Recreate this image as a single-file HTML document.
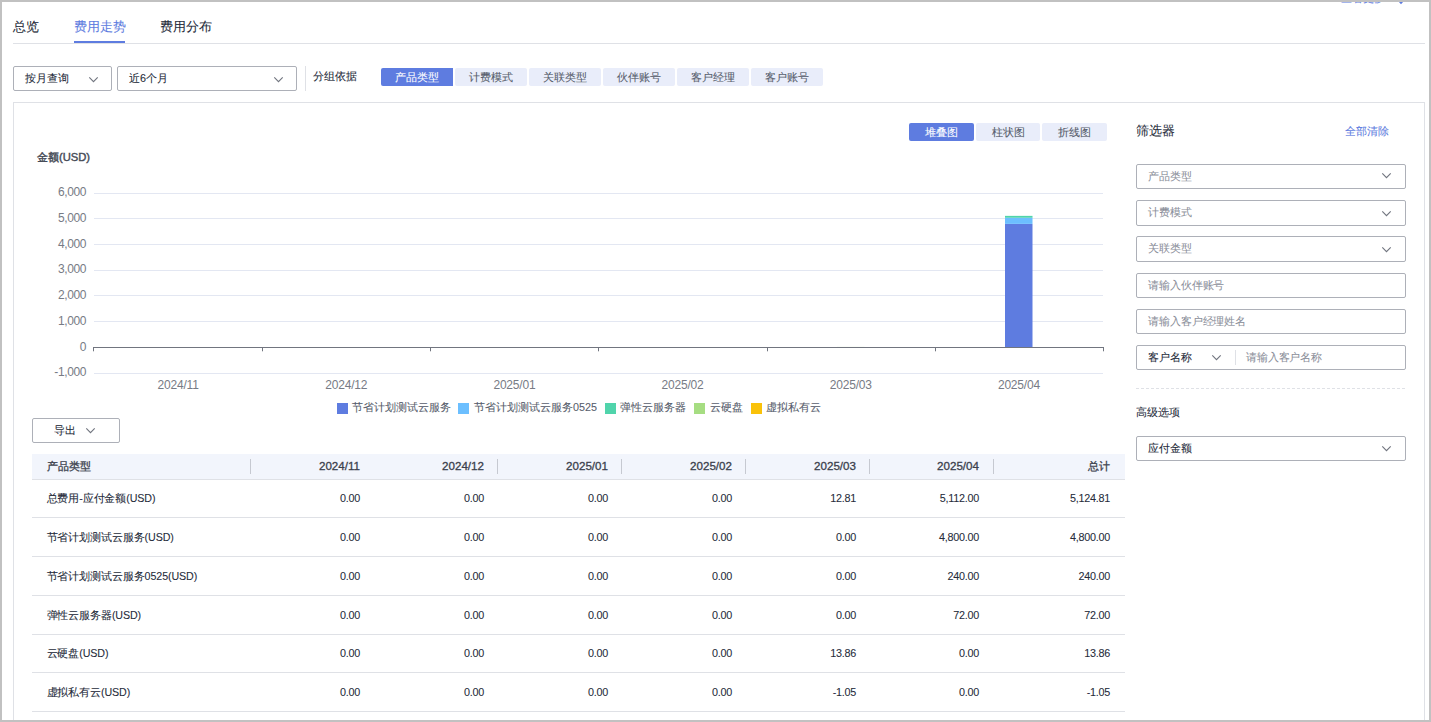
<!DOCTYPE html><html><head><meta charset="utf-8"><style>
html,body{margin:0;padding:0;}
body{width:1431px;height:722px;overflow:hidden;position:relative;background:#fff;font-family:"Liberation Sans",sans-serif;}
.t{position:absolute;line-height:20px;height:20px;white-space:nowrap;-webkit-text-stroke:0.08px currentColor;}
.b{position:absolute;box-sizing:border-box;}
</style></head><body>
<div class="t" style="left:1341px;top:-12px;font-size:10.8px;color:#5e7ce0;">查看更多</div>
<svg class="b" style="left:1397.5px;top:0px" width="7" height="5"><path d="M0 1 L6 1 L3 4.2 Z" fill="#5e7ce0"/></svg>
<div class="t" style="left:13px;top:17px;font-size:12.6px;color:#252b3a;">总览</div>
<div class="t" style="left:74px;top:17px;font-size:12.6px;color:#5e7ce0;">费用走势</div>
<div class="t" style="left:160px;top:17px;font-size:12.6px;color:#252b3a;">费用分布</div>
<div class="b" style="left:13px;top:43px;width:1412px;height:1px;background:#dfe1e6"></div>
<div class="b" style="left:74px;top:41px;width:51px;height:2px;background:#5e7ce0"></div>
<div class="b" style="left:13px;top:66px;width:99px;height:25px;border:1px solid #adb0b8;border-radius:2px"></div>
<div class="t" style="left:25px;top:68px;font-size:10.8px;color:#252b3a;">按月查询</div>
<svg class="b" style="left:88px;top:75.5px" width="11" height="7" viewBox="-1 -1 11 7"><path d="M0.3 0.3 L4.5 4.7 L8.7 0.3" fill="none" stroke="#71757f" stroke-width="1.1"/></svg>
<div class="b" style="left:117px;top:66px;width:180px;height:25px;border:1px solid #adb0b8;border-radius:2px"></div>
<div class="t" style="left:129px;top:68px;font-size:10.8px;color:#252b3a;">近6个月</div>
<svg class="b" style="left:272.5px;top:75.5px" width="11" height="7" viewBox="-1 -1 11 7"><path d="M0.3 0.3 L4.5 4.7 L8.7 0.3" fill="none" stroke="#71757f" stroke-width="1.1"/></svg>
<div class="b" style="left:305px;top:66px;width:1px;height:25px;background:#dfe1e6"></div>
<div class="t" style="left:313px;top:66px;font-size:10.8px;color:#252b3a;">分组依据</div>
<div class="b" style="left:381px;top:68px;width:72px;height:18px;background:#5e7ce0;border-radius:2px 0 0 2px"></div>
<div class="t" style="left:317px;width:200px;top:67px;font-size:10.8px;color:#fff;text-align:center;">产品类型</div>
<div class="b" style="left:455px;top:68px;width:72px;height:18px;background:#e9edfa;border-radius:2px"></div>
<div class="t" style="left:391px;width:200px;top:67px;font-size:10.8px;color:#575d6c;text-align:center;">计费模式</div>
<div class="b" style="left:529px;top:68px;width:72px;height:18px;background:#e9edfa;border-radius:2px"></div>
<div class="t" style="left:465px;width:200px;top:67px;font-size:10.8px;color:#575d6c;text-align:center;">关联类型</div>
<div class="b" style="left:603px;top:68px;width:72px;height:18px;background:#e9edfa;border-radius:2px"></div>
<div class="t" style="left:539px;width:200px;top:67px;font-size:10.8px;color:#575d6c;text-align:center;">伙伴账号</div>
<div class="b" style="left:677px;top:68px;width:72px;height:18px;background:#e9edfa;border-radius:2px"></div>
<div class="t" style="left:613px;width:200px;top:67px;font-size:10.8px;color:#575d6c;text-align:center;">客户经理</div>
<div class="b" style="left:751px;top:68px;width:72px;height:18px;background:#e9edfa;border-radius:2px"></div>
<div class="t" style="left:687px;width:200px;top:67px;font-size:10.8px;color:#575d6c;text-align:center;">客户账号</div>
<div class="b" style="left:13px;top:102px;width:1412px;height:798px;border:1px solid #dfe1e6"></div>
<div class="b" style="left:909px;top:123px;width:65px;height:18px;background:#5e7ce0;border-radius:2px"></div>
<div class="t" style="left:841.5px;width:200px;top:122px;font-size:10.8px;color:#fff;text-align:center;">堆叠图</div>
<div class="b" style="left:976px;top:123px;width:64px;height:18px;background:#e9edfa;border-radius:2px"></div>
<div class="t" style="left:908.0px;width:200px;top:122px;font-size:10.8px;color:#575d6c;text-align:center;">柱状图</div>
<div class="b" style="left:1042px;top:123px;width:65px;height:18px;background:#e9edfa;border-radius:2px"></div>
<div class="t" style="left:974.5px;width:200px;top:122px;font-size:10.8px;color:#575d6c;text-align:center;">折线图</div>
<div class="t" style="left:37px;top:147px;font-size:11.2px;color:#454a56;-webkit-text-stroke:0.4px #454a56">金额(USD)</div>
<svg class="b" style="left:0;top:0" width="1431" height="722"><line x1="94" y1="193.5" x2="1103" y2="193.5" stroke="#e3e7f2" stroke-width="1"/><line x1="94" y1="218.5" x2="1103" y2="218.5" stroke="#e3e7f2" stroke-width="1"/><line x1="94" y1="244.5" x2="1103" y2="244.5" stroke="#e3e7f2" stroke-width="1"/><line x1="94" y1="270.5" x2="1103" y2="270.5" stroke="#e3e7f2" stroke-width="1"/><line x1="94" y1="295.5" x2="1103" y2="295.5" stroke="#e3e7f2" stroke-width="1"/><line x1="94" y1="321.5" x2="1103" y2="321.5" stroke="#e3e7f2" stroke-width="1"/><line x1="94" y1="373.5" x2="1103" y2="373.5" stroke="#e3e7f2" stroke-width="1"/><rect x="1005" y="223.892" width="27.5" height="123.40800000000002" fill="#5e7ce0"/><rect x="1005" y="217.7216" width="27.5" height="6.170400000000001" fill="#6cbfff"/><rect x="1005" y="215.87048000000001" width="27.5" height="1.8511199999999803" fill="#50d4ab"/><rect x="837" y="346.9436594" width="27.5" height="0.35634060000001" fill="#a6dd82"/><line x1="93.5" y1="347.5" x2="1103" y2="347.5" stroke="#71757f" stroke-width="1"/><line x1="93.5" y1="347" x2="93.5" y2="351.3" stroke="#71757f" stroke-width="1"/><line x1="262.5" y1="347" x2="262.5" y2="351.3" stroke="#71757f" stroke-width="1"/><line x1="430.5" y1="347" x2="430.5" y2="351.3" stroke="#71757f" stroke-width="1"/><line x1="598.5" y1="347" x2="598.5" y2="351.3" stroke="#71757f" stroke-width="1"/><line x1="767.5" y1="347" x2="767.5" y2="351.3" stroke="#71757f" stroke-width="1"/><line x1="935.5" y1="347" x2="935.5" y2="351.3" stroke="#71757f" stroke-width="1"/><line x1="1103.5" y1="347" x2="1103.5" y2="351.3" stroke="#71757f" stroke-width="1"/></svg>
<div class="t" style="right:1345px;top:182.24px;font-size:12px;color:#777b85;text-align:right;letter-spacing:-0.4px;-webkit-text-stroke:0">6,000</div>
<div class="t" style="right:1345px;top:207.95px;font-size:12px;color:#777b85;text-align:right;letter-spacing:-0.4px;-webkit-text-stroke:0">5,000</div>
<div class="t" style="right:1345px;top:233.66px;font-size:12px;color:#777b85;text-align:right;letter-spacing:-0.4px;-webkit-text-stroke:0">4,000</div>
<div class="t" style="right:1345px;top:259.37px;font-size:12px;color:#777b85;text-align:right;letter-spacing:-0.4px;-webkit-text-stroke:0">3,000</div>
<div class="t" style="right:1345px;top:285.08px;font-size:12px;color:#777b85;text-align:right;letter-spacing:-0.4px;-webkit-text-stroke:0">2,000</div>
<div class="t" style="right:1345px;top:310.79px;font-size:12px;color:#777b85;text-align:right;letter-spacing:-0.4px;-webkit-text-stroke:0">1,000</div>
<div class="t" style="right:1345px;top:336.5px;font-size:12px;color:#777b85;text-align:right;letter-spacing:-0.4px;-webkit-text-stroke:0">0</div>
<div class="t" style="right:1345px;top:362.21px;font-size:12px;color:#777b85;text-align:right;letter-spacing:-0.4px;-webkit-text-stroke:0">-1,000</div>
<div class="t" style="left:78.08333333333331px;width:200px;top:375px;font-size:12px;color:#777b85;text-align:center;letter-spacing:-0.2px;-webkit-text-stroke:0">2024/11</div>
<div class="t" style="left:246.25px;width:200px;top:375px;font-size:12px;color:#777b85;text-align:center;letter-spacing:-0.2px;-webkit-text-stroke:0">2024/12</div>
<div class="t" style="left:414.41666666666663px;width:200px;top:375px;font-size:12px;color:#777b85;text-align:center;letter-spacing:-0.2px;-webkit-text-stroke:0">2025/01</div>
<div class="t" style="left:582.5833333333333px;width:200px;top:375px;font-size:12px;color:#777b85;text-align:center;letter-spacing:-0.2px;-webkit-text-stroke:0">2025/02</div>
<div class="t" style="left:750.75px;width:200px;top:375px;font-size:12px;color:#777b85;text-align:center;letter-spacing:-0.2px;-webkit-text-stroke:0">2025/03</div>
<div class="t" style="left:918.9166666666666px;width:200px;top:375px;font-size:12px;color:#777b85;text-align:center;letter-spacing:-0.2px;-webkit-text-stroke:0">2025/04</div>
<div class="b" style="left:337px;top:403px;width:11px;height:11px;background:#5e7ce0"></div>
<div class="t" style="left:352px;top:397.4px;font-size:10.8px;color:#575d6c;">节省计划测试云服务</div>
<div class="b" style="left:458px;top:403px;width:11px;height:11px;background:#6cbfff"></div>
<div class="t" style="left:474px;top:397.4px;font-size:10.8px;color:#575d6c;">节省计划测试云服务0525</div>
<div class="b" style="left:605px;top:403px;width:11px;height:11px;background:#50d4ab"></div>
<div class="t" style="left:620px;top:397.4px;font-size:10.8px;color:#575d6c;">弹性云服务器</div>
<div class="b" style="left:694px;top:403px;width:11px;height:11px;background:#a6dd82"></div>
<div class="t" style="left:710px;top:397.4px;font-size:10.8px;color:#575d6c;">云硬盘</div>
<div class="b" style="left:751px;top:403px;width:11px;height:11px;background:#fac20a"></div>
<div class="t" style="left:766px;top:397.4px;font-size:10.8px;color:#575d6c;">虚拟私有云</div>
<div class="b" style="left:32px;top:418px;width:88px;height:25px;border:1px solid #adb0b8;border-radius:2px"></div>
<div class="t" style="left:54.4px;top:420px;font-size:10.8px;color:#252b3a;">导出</div>
<svg class="b" style="left:85px;top:427px" width="11" height="7" viewBox="-1 -1 11 7"><path d="M0.3 0.3 L4.5 4.7 L8.7 0.3" fill="none" stroke="#71757f" stroke-width="1.1"/></svg>
<div class="b" style="left:32px;top:454px;width:1093px;height:25px;background:#f2f5fc"></div>
<div class="b" style="left:32px;top:479px;width:1093px;height:1px;background:#dfe1e6"></div>
<div class="t" style="left:47px;top:456px;font-size:10.8px;color:#3a3f4c;-webkit-text-stroke:0.3px #3a3f4c">产品类型</div>
<div class="t" style="right:1071px;top:456px;font-size:11.6px;color:#3a3f4c;text-align:right;-webkit-text-stroke:0.3px #3a3f4c">2024/11</div>
<div class="t" style="right:947px;top:456px;font-size:11.6px;color:#3a3f4c;text-align:right;-webkit-text-stroke:0.3px #3a3f4c">2024/12</div>
<div class="t" style="right:823px;top:456px;font-size:11.6px;color:#3a3f4c;text-align:right;-webkit-text-stroke:0.3px #3a3f4c">2025/01</div>
<div class="t" style="right:699px;top:456px;font-size:11.6px;color:#3a3f4c;text-align:right;-webkit-text-stroke:0.3px #3a3f4c">2025/02</div>
<div class="t" style="right:575px;top:456px;font-size:11.6px;color:#3a3f4c;text-align:right;-webkit-text-stroke:0.3px #3a3f4c">2025/03</div>
<div class="t" style="right:452px;top:456px;font-size:11.6px;color:#3a3f4c;text-align:right;-webkit-text-stroke:0.3px #3a3f4c">2025/04</div>
<div class="t" style="right:321px;top:456px;font-size:10.8px;color:#3a3f4c;text-align:right;-webkit-text-stroke:0.3px #3a3f4c">总计</div>
<div class="b" style="left:250px;top:459px;width:1px;height:15px;background:#c6c9d1"></div>
<div class="b" style="left:497px;top:459px;width:1px;height:15px;background:#c6c9d1"></div>
<div class="b" style="left:621px;top:459px;width:1px;height:15px;background:#c6c9d1"></div>
<div class="b" style="left:745px;top:459px;width:1px;height:15px;background:#c6c9d1"></div>
<div class="b" style="left:869px;top:459px;width:1px;height:15px;background:#c6c9d1"></div>
<div class="b" style="left:993px;top:459px;width:1px;height:15px;background:#c6c9d1"></div>
<div class="t" style="left:46.5px;top:488.0px;font-size:10.7px;color:#252b3a;letter-spacing:-0.1px">总费用-应付金额(USD)</div>
<div class="t" style="right:1071px;top:488.0px;font-size:10.8px;color:#252b3a;text-align:right;letter-spacing:-0.25px">0.00</div>
<div class="t" style="right:947px;top:488.0px;font-size:10.8px;color:#252b3a;text-align:right;letter-spacing:-0.25px">0.00</div>
<div class="t" style="right:823px;top:488.0px;font-size:10.8px;color:#252b3a;text-align:right;letter-spacing:-0.25px">0.00</div>
<div class="t" style="right:699px;top:488.0px;font-size:10.8px;color:#252b3a;text-align:right;letter-spacing:-0.25px">0.00</div>
<div class="t" style="right:575px;top:488.0px;font-size:10.8px;color:#252b3a;text-align:right;letter-spacing:-0.25px">12.81</div>
<div class="t" style="right:452px;top:488.0px;font-size:10.8px;color:#252b3a;text-align:right;letter-spacing:-0.25px">5,112.00</div>
<div class="t" style="right:321px;top:488.0px;font-size:10.8px;color:#252b3a;text-align:right;letter-spacing:-0.25px">5,124.81</div>
<div class="b" style="left:32px;top:517px;width:1093px;height:1px;background:#dfe1e6"></div>
<div class="t" style="left:46.5px;top:526.5px;font-size:10.7px;color:#252b3a;letter-spacing:-0.1px">节省计划测试云服务(USD)</div>
<div class="t" style="right:1071px;top:526.5px;font-size:10.8px;color:#252b3a;text-align:right;letter-spacing:-0.25px">0.00</div>
<div class="t" style="right:947px;top:526.5px;font-size:10.8px;color:#252b3a;text-align:right;letter-spacing:-0.25px">0.00</div>
<div class="t" style="right:823px;top:526.5px;font-size:10.8px;color:#252b3a;text-align:right;letter-spacing:-0.25px">0.00</div>
<div class="t" style="right:699px;top:526.5px;font-size:10.8px;color:#252b3a;text-align:right;letter-spacing:-0.25px">0.00</div>
<div class="t" style="right:575px;top:526.5px;font-size:10.8px;color:#252b3a;text-align:right;letter-spacing:-0.25px">0.00</div>
<div class="t" style="right:452px;top:526.5px;font-size:10.8px;color:#252b3a;text-align:right;letter-spacing:-0.25px">4,800.00</div>
<div class="t" style="right:321px;top:526.5px;font-size:10.8px;color:#252b3a;text-align:right;letter-spacing:-0.25px">4,800.00</div>
<div class="b" style="left:32px;top:556px;width:1093px;height:1px;background:#dfe1e6"></div>
<div class="t" style="left:46.5px;top:565.5px;font-size:10.7px;color:#252b3a;letter-spacing:-0.1px">节省计划测试云服务0525(USD)</div>
<div class="t" style="right:1071px;top:565.5px;font-size:10.8px;color:#252b3a;text-align:right;letter-spacing:-0.25px">0.00</div>
<div class="t" style="right:947px;top:565.5px;font-size:10.8px;color:#252b3a;text-align:right;letter-spacing:-0.25px">0.00</div>
<div class="t" style="right:823px;top:565.5px;font-size:10.8px;color:#252b3a;text-align:right;letter-spacing:-0.25px">0.00</div>
<div class="t" style="right:699px;top:565.5px;font-size:10.8px;color:#252b3a;text-align:right;letter-spacing:-0.25px">0.00</div>
<div class="t" style="right:575px;top:565.5px;font-size:10.8px;color:#252b3a;text-align:right;letter-spacing:-0.25px">0.00</div>
<div class="t" style="right:452px;top:565.5px;font-size:10.8px;color:#252b3a;text-align:right;letter-spacing:-0.25px">240.00</div>
<div class="t" style="right:321px;top:565.5px;font-size:10.8px;color:#252b3a;text-align:right;letter-spacing:-0.25px">240.00</div>
<div class="b" style="left:32px;top:595px;width:1093px;height:1px;background:#dfe1e6"></div>
<div class="t" style="left:46.5px;top:604.5px;font-size:10.7px;color:#252b3a;letter-spacing:-0.1px">弹性云服务器(USD)</div>
<div class="t" style="right:1071px;top:604.5px;font-size:10.8px;color:#252b3a;text-align:right;letter-spacing:-0.25px">0.00</div>
<div class="t" style="right:947px;top:604.5px;font-size:10.8px;color:#252b3a;text-align:right;letter-spacing:-0.25px">0.00</div>
<div class="t" style="right:823px;top:604.5px;font-size:10.8px;color:#252b3a;text-align:right;letter-spacing:-0.25px">0.00</div>
<div class="t" style="right:699px;top:604.5px;font-size:10.8px;color:#252b3a;text-align:right;letter-spacing:-0.25px">0.00</div>
<div class="t" style="right:575px;top:604.5px;font-size:10.8px;color:#252b3a;text-align:right;letter-spacing:-0.25px">0.00</div>
<div class="t" style="right:452px;top:604.5px;font-size:10.8px;color:#252b3a;text-align:right;letter-spacing:-0.25px">72.00</div>
<div class="t" style="right:321px;top:604.5px;font-size:10.8px;color:#252b3a;text-align:right;letter-spacing:-0.25px">72.00</div>
<div class="b" style="left:32px;top:634px;width:1093px;height:1px;background:#dfe1e6"></div>
<div class="t" style="left:46.5px;top:643.0px;font-size:10.7px;color:#252b3a;letter-spacing:-0.1px">云硬盘(USD)</div>
<div class="t" style="right:1071px;top:643.0px;font-size:10.8px;color:#252b3a;text-align:right;letter-spacing:-0.25px">0.00</div>
<div class="t" style="right:947px;top:643.0px;font-size:10.8px;color:#252b3a;text-align:right;letter-spacing:-0.25px">0.00</div>
<div class="t" style="right:823px;top:643.0px;font-size:10.8px;color:#252b3a;text-align:right;letter-spacing:-0.25px">0.00</div>
<div class="t" style="right:699px;top:643.0px;font-size:10.8px;color:#252b3a;text-align:right;letter-spacing:-0.25px">0.00</div>
<div class="t" style="right:575px;top:643.0px;font-size:10.8px;color:#252b3a;text-align:right;letter-spacing:-0.25px">13.86</div>
<div class="t" style="right:452px;top:643.0px;font-size:10.8px;color:#252b3a;text-align:right;letter-spacing:-0.25px">0.00</div>
<div class="t" style="right:321px;top:643.0px;font-size:10.8px;color:#252b3a;text-align:right;letter-spacing:-0.25px">13.86</div>
<div class="b" style="left:32px;top:672px;width:1093px;height:1px;background:#dfe1e6"></div>
<div class="t" style="left:46.5px;top:681.5px;font-size:10.7px;color:#252b3a;letter-spacing:-0.1px">虚拟私有云(USD)</div>
<div class="t" style="right:1071px;top:681.5px;font-size:10.8px;color:#252b3a;text-align:right;letter-spacing:-0.25px">0.00</div>
<div class="t" style="right:947px;top:681.5px;font-size:10.8px;color:#252b3a;text-align:right;letter-spacing:-0.25px">0.00</div>
<div class="t" style="right:823px;top:681.5px;font-size:10.8px;color:#252b3a;text-align:right;letter-spacing:-0.25px">0.00</div>
<div class="t" style="right:699px;top:681.5px;font-size:10.8px;color:#252b3a;text-align:right;letter-spacing:-0.25px">0.00</div>
<div class="t" style="right:575px;top:681.5px;font-size:10.8px;color:#252b3a;text-align:right;letter-spacing:-0.25px">-1.05</div>
<div class="t" style="right:452px;top:681.5px;font-size:10.8px;color:#252b3a;text-align:right;letter-spacing:-0.25px">0.00</div>
<div class="t" style="right:321px;top:681.5px;font-size:10.8px;color:#252b3a;text-align:right;letter-spacing:-0.25px">-1.05</div>
<div class="b" style="left:32px;top:711px;width:1093px;height:1px;background:#dfe1e6"></div>
<div class="t" style="left:1136px;top:121px;font-size:12.6px;color:#252b3a;-webkit-text-stroke:0.05px">筛选器</div>
<div class="t" style="left:1345px;top:121px;font-size:10.8px;color:#5e7ce0;">全部清除</div>
<div class="b" style="left:1136px;top:164px;width:270px;height:25px;border:1px solid #adb0b8;border-radius:2px"></div>
<div class="t" style="left:1148.3px;top:165.5px;font-size:10.8px;color:#8a8e99;letter-spacing:-0.15px;-webkit-text-stroke:0.05px">产品类型</div>
<svg class="b" style="left:1381px;top:172px" width="11" height="7" viewBox="-1 -1 11 7"><path d="M0.3 0.3 L4.5 4.7 L8.7 0.3" fill="none" stroke="#71757f" stroke-width="1.1"/></svg>
<div class="b" style="left:1136px;top:200px;width:270px;height:26px;border:1px solid #adb0b8;border-radius:2px"></div>
<div class="t" style="left:1148.3px;top:201.5px;font-size:10.8px;color:#8a8e99;letter-spacing:-0.15px;-webkit-text-stroke:0.05px">计费模式</div>
<svg class="b" style="left:1381px;top:209.5px" width="11" height="7" viewBox="-1 -1 11 7"><path d="M0.3 0.3 L4.5 4.7 L8.7 0.3" fill="none" stroke="#71757f" stroke-width="1.1"/></svg>
<div class="b" style="left:1136px;top:236px;width:270px;height:26px;border:1px solid #adb0b8;border-radius:2px"></div>
<div class="t" style="left:1148.3px;top:237.5px;font-size:10.8px;color:#8a8e99;letter-spacing:-0.15px;-webkit-text-stroke:0.05px">关联类型</div>
<svg class="b" style="left:1381px;top:245.5px" width="11" height="7" viewBox="-1 -1 11 7"><path d="M0.3 0.3 L4.5 4.7 L8.7 0.3" fill="none" stroke="#71757f" stroke-width="1.1"/></svg>
<div class="b" style="left:1136px;top:273px;width:270px;height:25px;border:1px solid #adb0b8;border-radius:2px"></div>
<div class="t" style="left:1148.3px;top:274.5px;font-size:10.8px;color:#8a8e99;letter-spacing:-0.15px;-webkit-text-stroke:0.05px">请输入伙伴账号</div>
<div class="b" style="left:1136px;top:309px;width:270px;height:25px;border:1px solid #adb0b8;border-radius:2px"></div>
<div class="t" style="left:1148.3px;top:310.5px;font-size:10.8px;color:#8a8e99;letter-spacing:-0.15px;-webkit-text-stroke:0.05px">请输入客户经理姓名</div>
<div class="b" style="left:1136px;top:345px;width:270px;height:25px;border:1px solid #adb0b8;border-radius:2px"></div>
<div class="t" style="left:1148px;top:346.5px;font-size:10.8px;color:#252b3a;">客户名称</div>
<svg class="b" style="left:1211px;top:353.5px" width="11" height="7" viewBox="-1 -1 11 7"><path d="M0.3 0.3 L4.5 4.7 L8.7 0.3" fill="none" stroke="#71757f" stroke-width="1.1"/></svg>
<div class="b" style="left:1235px;top:350px;width:1px;height:15px;background:#dfe1e6"></div>
<div class="t" style="left:1246px;top:347px;font-size:10.8px;color:#8a8e99;letter-spacing:-0.15px;-webkit-text-stroke:0.05px">请输入客户名称</div>
<div class="b" style="left:1136px;top:388px;width:270px;height:1px;background:repeating-linear-gradient(90deg,#dfe1e6 0 3px,transparent 3px 5.02px)"></div>
<div class="t" style="left:1136px;top:402.2px;font-size:10.8px;color:#252b3a;">高级选项</div>
<div class="b" style="left:1136px;top:436px;width:270px;height:25px;border:1px solid #adb0b8;border-radius:2px"></div>
<div class="t" style="left:1148px;top:437.5px;font-size:10.8px;color:#252b3a;">应付金额</div>
<svg class="b" style="left:1381px;top:444.5px" width="11" height="7" viewBox="-1 -1 11 7"><path d="M0.3 0.3 L4.5 4.7 L8.7 0.3" fill="none" stroke="#71757f" stroke-width="1.1"/></svg>
<div class="b" style="left:0;top:0;width:1431px;height:722px;border:2px solid #c1c1c1"></div>
</body></html>
